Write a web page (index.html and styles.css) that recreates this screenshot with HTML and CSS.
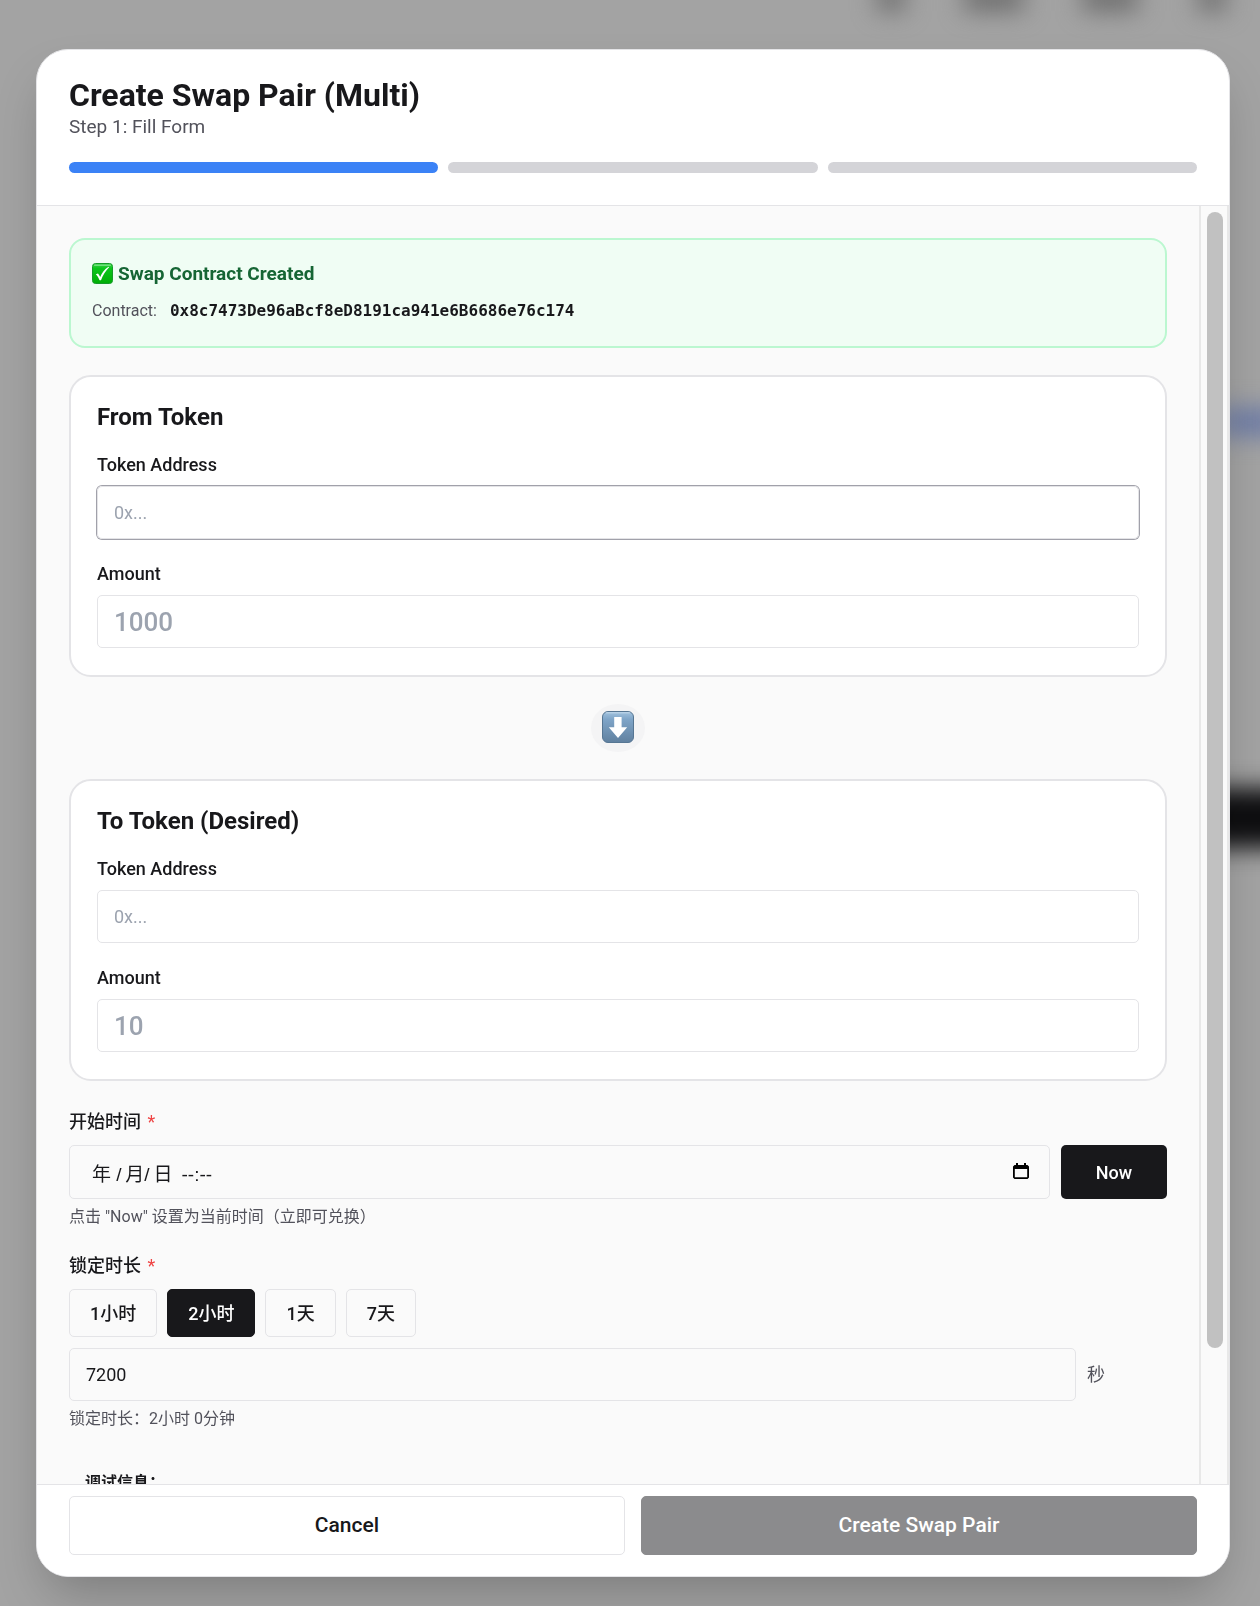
FILE: index.html
```html
<!DOCTYPE html>
<html lang="zh-CN">
<head>
    <meta charset="UTF-8">
    <meta name="viewport" content="width=device-width, initial-scale=1.0">
    <title>Create Swap Pair (Multi)</title>
    <link rel="stylesheet" href="styles.css">
</head>
<body>
    <!-- blurred page behind the dialog -->
    <div class="backdrop" aria-hidden="true">
        <span class="blob nav-1"></span>
        <span class="blob nav-2"></span>
        <span class="blob nav-3"></span>
        <span class="blob nav-4"></span>
        <span class="blob link"></span>
        <span class="blob cta"></span>
    </div>

    <div class="overlay">
        <div class="modal" role="dialog" aria-labelledby="modalTitle">
            <header class="modal-header">
                <h1 id="modalTitle">Create Swap Pair (Multi)</h1>
                <p class="step">Step 1: Fill Form</p>
                <div class="progress">
                    <span class="bar active"></span>
                    <span class="bar"></span>
                    <span class="bar"></span>
                </div>
            </header>

            <div class="modal-body">
                <form class="content" id="swapForm">
                    <section class="success">
                        <h2>
                            <svg class="check" viewBox="0 0 21 21" aria-hidden="true">
                                <defs>
                                    <linearGradient id="green" x1="0" y1="0" x2="0" y2="1">
                                        <stop offset="0" stop-color="#3fd14b"/>
                                        <stop offset=".25" stop-color="#0bc51a"/>
                                        <stop offset="1" stop-color="#00ae05"/>
                                    </linearGradient>
                                </defs>
                                <rect x=".5" y=".5" width="20" height="20" rx="3" fill="url(#green)" stroke="#159b28"/>
                                <path d="M2.5 2.2h16" stroke="#8ee89a" stroke-linecap="round"/>
                                <path d="M3.8 11.2l2.2-.8c1 1.200 1.600 2.300 2.200 3.600C9.900 10 12.500 6.200 16.500 3.700l.6.6C13.400 8 11 12.200 9 17.300H7.600C6.700 15 5.500 12.900 3.800 11.200z" fill="#fff"/>
                            </svg>
                            Swap Contract Created
                        </h2>
                        <p>Contract: <code>0x8c7473De96aBcf8eD8191ca941e6B6686e76c174</code></p>
                    </section>

                    <section class="card">
                        <h3>From Token</h3>
                        <div class="field">
                            <label for="fromAddress">Token Address</label>
                            <input class="focused" type="text" id="fromAddress" placeholder="0x...">
                        </div>
                        <div class="field">
                            <label for="fromAmount">Amount</label>
                            <input class="amount" type="text" id="fromAmount" placeholder="1000">
                        </div>
                    </section>

                    <div class="direction">
                        <svg viewBox="0 0 32 32" role="img" aria-label="to">
                            <defs>
                                <linearGradient id="blue" x1="0" y1="0" x2="0" y2="1">
                                    <stop offset="0" stop-color="#a3c3df"/>
                                    <stop offset=".25" stop-color="#7fa5c8"/>
                                    <stop offset="1" stop-color="#60809f"/>
                                </linearGradient>
                            </defs>
                            <rect x=".5" y=".5" width="31" height="31" rx="5.500" fill="url(#blue)" stroke="#567693"/>
                            <path d="M4.500 1.800h23" stroke="#c2d9ec" stroke-linecap="round"/>
                            <path d="M12.200 6h7.400v10.200h5.600L16 27 6.800 16.200h5.400z" fill="#fff"/>
                        </svg>
                    </div>

                    <section class="card">
                        <h3>To Token (Desired)</h3>
                        <div class="field">
                            <label for="toAddress">Token Address</label>
                            <input type="text" id="toAddress" placeholder="0x...">
                        </div>
                        <div class="field">
                            <label for="toAmount">Amount</label>
                            <input class="amount" type="text" id="toAmount" placeholder="10">
                        </div>
                    </section>

                    <div class="group">
                        <label for="startTime">开始时间 <span class="required">*</span></label>
                        <div class="row">
                            <div class="datetime">
                                <input type="text" id="startTime" value="年 /&thinsp;月/&thinsp;日&nbsp;&thinsp;--:--">
                                <button type="button" class="picker" aria-label="选择日期">
                                    <svg viewBox="0 0 16 18" aria-hidden="true">
                                        <path d="M3 0h2v2h6V0h2v2h1.500L16 3.500v11L14.500 16h-13L0 14.500v-11L1.500 2H3zM1.800 6v8.200h12.400V6z" fill="#000" fill-rule="evenodd"/>
                                    </svg>
                                </button>
                            </div>
                            <button type="button" class="now">Now</button>
                        </div>
                        <p class="hint">点击 "Now" 设置为当前时间（立即可兑换）</p>
                    </div>

                    <div class="group">
                        <label for="duration">锁定时长 <span class="required">*</span></label>
                        <div class="presets">
                            <button type="button">1小时</button>
                            <button type="button" class="selected">2小时</button>
                            <button type="button">1天</button>
                            <button type="button">7天</button>
                        </div>
                        <div class="row">
                            <input type="text" id="duration" value="7200">
                            <span class="unit">秒</span>
                        </div>
                        <p class="hint">锁定时长：2小时 0分钟</p>
                    </div>

                    <div class="debug">
                        <strong>调试信息：</strong>
                    </div>
                </form>
                <div class="scrollbar"><span class="thumb"></span></div>
            </div>

            <footer class="modal-footer">
                <button type="button" class="cancel">Cancel</button>
                <button type="submit" form="swapForm" class="submit" disabled>Create Swap Pair</button>
            </footer>
        </div>
    </div>
</body>
</html>
```

FILE: styles.css
```css
* {
    box-sizing: border-box;
}
body {
    margin: 0;
    font-family: Roboto, "Noto Sans CJK SC", sans-serif;
    font-size: 18px;
    line-height: 27px;
    color: #18181b;
    background: #a3a3a3;
}
h1, h2, h3, p {
    margin: 0;
}
input, button {
    font: inherit;
    color: inherit;
}

/* backdrop */
.backdrop {
    position: fixed;
    inset: 0;
    overflow: hidden;
}
.blob {
    position: absolute;
    filter: blur(12px);
    background: #6c6c6c;
}
.nav-1 {
    top: -15px;
    right: 355px;
    width: 28px;
    height: 26px;
}
.nav-2 {
    top: -15px;
    right: 236px;
    width: 60px;
    height: 26px;
}
.nav-3 {
    top: -15px;
    right: 122px;
    width: 56px;
    height: 26px;
}
.nav-4 {
    top: -15px;
    right: 34px;
    width: 28px;
    height: 26px;
}
.link {
    top: 408px;
    right: -20px;
    width: 60px;
    height: 28px;
    background: #6c7ba6;
}
.cta {
    top: 788px;
    right: -40px;
    width: 110px;
    height: 60px;
    background: #0e0e10;
}

/* modal */
.overlay {
    position: relative;
    height: 100vh;
    padding: 49px 30px 29px 36px;
}
.modal {
    display: flex;
    flex-direction: column;
    height: 100%;
    overflow: hidden;
    background: white;
    border: 1px solid #e4e4e7;
    border-radius: 32px;
    box-shadow: 0 25px 50px -12px rgba(0,0,0,0.25);
}
.modal-header {
    padding: 27px 32px 32px;
    border-bottom: 1px solid #e4e4e7;
}
.modal-header h1 {
    font-size: 32px;
    line-height: 36px;
    font-weight: 700;
}
.step {
    font-size: 19px;
    color: #52525b;
}
.progress {
    display: flex;
    gap: 10px;
    margin-top: 22px;
}
.bar {
    flex: 1;
    height: 11px;
    border-radius: 6px;
    background: #d4d4d8;
}
.bar.active {
    background: #3b82f6;
}
.modal-body {
    flex: 1;
    min-height: 0;
    display: flex;
    overflow: hidden;
    background: #fafafa;
}
.content {
    flex: 1;
    min-width: 0;
    padding: 32px;
}
.scrollbar {
    width: 30px;
    padding: 6px 4px 10px 6px;
    border: solid #e8e8e8;
    border-width: 0 2px;
}
.thumb {
    display: block;
    width: 16px;
    height: 90%;
    border-radius: 8px;
    background: #c1c1c1;
}

/* contract box */
.success {
    padding: 20px 21px 22px;
    background: #f0fdf4;
    border: 2px solid #bbf7d0;
    border-radius: 16px;
}
.success h2 {
    display: flex;
    align-items: center;
    gap: 5px;
    margin-bottom: 10px;
    font-size: 19px;
    font-weight: 700;
    color: #166534;
}
.success p {
    font-size: 16px;
    color: #52525b;
}
.check {
    width: 21px;
    height: 21px;
}
.success code {
    margin-left: 9px;
    font-family: "DejaVu Sans Mono", monospace;
    font-size: 16px;
    font-weight: 700;
    color: #18181b;
}

/* token cards */
.card {
    margin-top: 27px;
    padding: 24px 26px 27px;
    background: white;
    border: 2px solid #e4e4e7;
    border-radius: 22px;
}
.card h3 {
    margin-bottom: 18px;
    font-size: 24px;
    line-height: 32px;
    font-weight: 700;
}
label {
    display: block;
    font-weight: 500;
}
.field + .field {
    margin-top: 21px;
}
.field label {
    margin-bottom: 8px;
}
input {
    display: block;
    width: 100%;
    height: 53px;
    padding: 0 16px;
    background: transparent;
    border: 1px solid #e4e4e7;
    border-radius: 5px;
    outline: none;
}
input::placeholder {
    color: #9ca3af;
    opacity: 1;
}
input.focused {
    box-shadow: 0 0 0 1px #a1a1aa;
}
.amount {
    font-size: 26px;
    font-weight: 500;
}
.direction {
    display: flex;
    align-items: center;
    justify-content: center;
    width: 54px;
    height: 48px;
    margin: 27px auto 0;
    padding-bottom: 2px;
    background: #f4f4f5;
    border-radius: 50%;
}
.direction svg {
    width: 32px;
    height: 32px;
}

/* time settings */
.group {
    margin-top: 27px;
}
.group + .group {
    margin-top: 23px;
}
.required {
    margin-left: 2px;
    font-weight: 400;
    color: #ef4444;
}
.row {
    display: flex;
    align-items: center;
    gap: 11px;
    margin: 10px 0 6px;
}
.presets + .row {
    margin-top: 11px;
}
.datetime {
    flex: 1;
    display: flex;
    align-items: center;
    padding-right: 20px;
    border: 1px solid #e4e4e7;
    border-radius: 5px;
}
.datetime input {
    height: 52px;
    padding: 0 22px;
    border: none;
    font-family: "Liberation Sans", "Noto Sans CJK SC", sans-serif;
    font-size: 19px;
}
.picker {
    display: flex;
    padding: 0;
    background: none;
    border: none;
    cursor: pointer;
}
.picker svg {
    width: 16px;
    height: 18px;
}
.now {
    width: 106px;
    height: 54px;
    background: #18181b;
    color: white;
    border: none;
    border-radius: 5px;
    font-weight: 500;
    cursor: pointer;
}
.hint {
    font-size: 16px;
    line-height: 24px;
    color: #52525b;
}
.presets {
    display: flex;
    gap: 10px;
    margin-top: 10px;
}
.presets button {
    height: 48px;
    padding: 0 20px;
    background: #fafafa;
    border: 1px solid #e4e4e7;
    border-radius: 5px;
    font-weight: 500;
    cursor: pointer;
}
.presets button.selected {
    background: #18181b;
    border-color: #18181b;
    color: white;
}
.unit {
    flex: 0 0 80px;
    color: #52525b;
}
.debug {
    margin-top: 24px;
    padding: 16px;
    font-size: 16px;
    line-height: 24px;
}

/* footer */
.modal-footer {
    display: flex;
    gap: 16px;
    padding: 11px 32px 21px;
    background: white;
    border-top: 1px solid #e4e4e7;
}
.modal-footer button {
    flex: 1;
    height: 59px;
    border-radius: 5px;
    font-size: 21px;
    font-weight: 500;
}
.cancel {
    background: white;
    border: 1px solid #e4e4e7;
    cursor: pointer;
}
.submit {
    background: #8b8b8d;
    border: 1px solid #8b8b8d;
    color: white;
}
```
